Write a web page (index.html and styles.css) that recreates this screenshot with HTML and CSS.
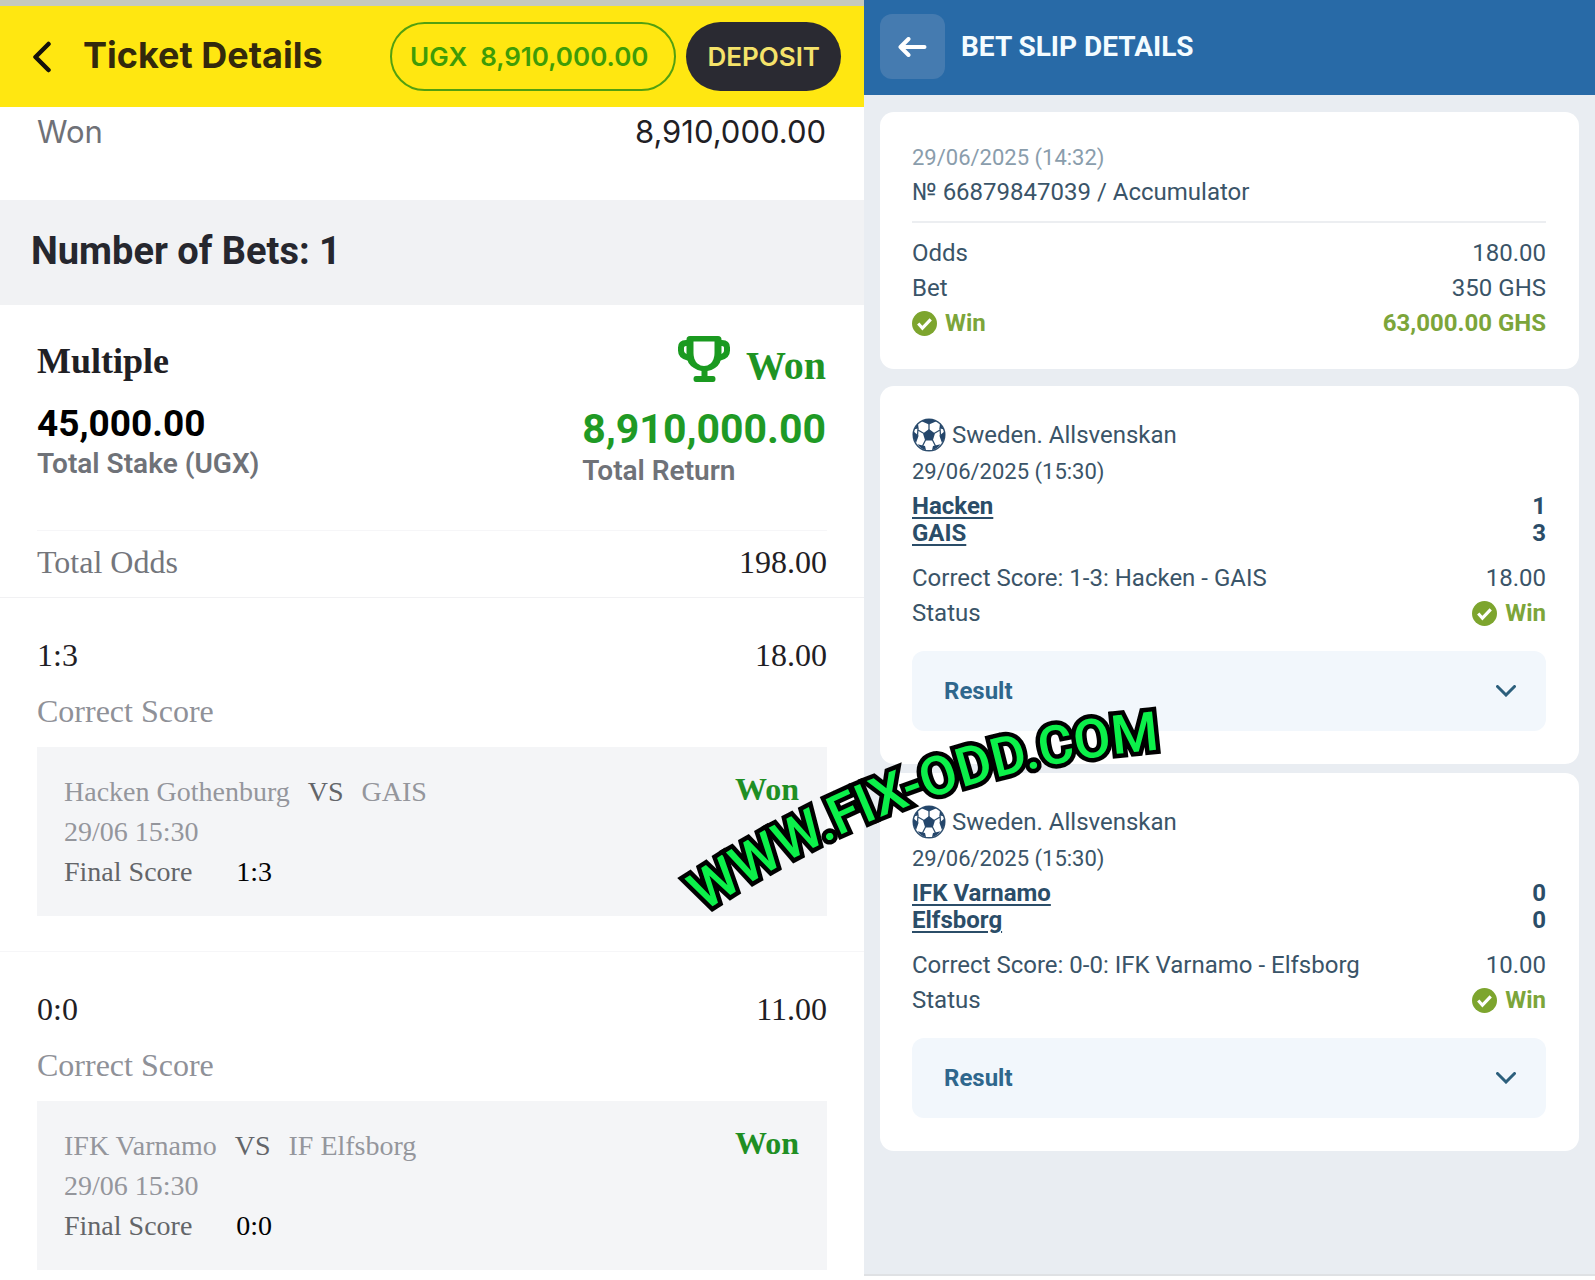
FILE: index.html
```html
<!DOCTYPE html>
<html lang="en">

<head>
    <meta charset="UTF-8">
    <meta name="viewport" content="width=device-width, initial-scale=1.0">
    <title>Ticket Details</title>
    <link rel="stylesheet" href="styles.css">
</head>

<body>
    <!-- Shared icons -->
    <svg class="sprite" aria-hidden="true">
        <symbol id="check" viewBox="0 0 24 24">
            <circle cx="12" cy="12" r="12" fill="#7da52e" />
            <path d="M6 12l4 4.500 8-8.500" fill="none" stroke="#fff" stroke-width="3" />
        </symbol>
        <symbol id="ball" viewBox="0 0 34 34">
            <circle cx="17" cy="17" r="15.8" fill="#fff" stroke="#2f4f6f" stroke-width="1.4" />
            <g fill="#24466b">
                <path d="M17 11l6 4.500-2.200 7h-7.600l-2.200-7z" />
                <path d="M9.500 3.200Q17-1 24.500 3.200L17 6.500z" />
                <path d="M33 13q.8 6.500-3 12l-2.600-7.300z" />
                <path d="M1 13q-.8 6.500 3 12l2.600-7.300z" />
                <path d="M28 5.500l4 6-4.600-1.300z" />
                <path d="M6 5.500l-4 6 4.600-1.300z" />
                <path d="M21 28l7.500-1.800q-3 4.500-8.500 6z" />
                <path d="M13 28l-7.500-1.800q3 4.500 8.500 6z" />
            </g>
            <path d="M17 5v7M22 15.500l6-3.500M20.200 21.500l3.300 6.500M13.800 21.500l-3.300 6.500M12 15.500L6 12M28 10l.5 8M6 10l-.5 8" fill="none" stroke="#2f4f6f" stroke-width="1.300" />
        </symbol>
        <symbol id="chevron" viewBox="0 0 20 12">
            <path d="M1.500 1.500L10 10l8.500-8.500" fill="none" stroke="#2c5f7c" stroke-width="3" stroke-linecap="round" />
        </symbol>
    </svg>

    <div class="page">
        <section class="ticket">
            <header class="ticket-header">
                <button class="back" aria-label="Back">
                    <svg width="18" height="32" viewBox="0 0 18 32">
                        <path d="M15.500 3L2.500 16l13 13" fill="none" stroke="#14120a" stroke-width="4.500" stroke-linecap="round" stroke-linejoin="round" />
                    </svg>
                </button>
                <h1>Ticket Details</h1>
                <button class="pill balance"><span>UGX</span><span>8,910,000.00</span></button>
                <button class="pill deposit">DEPOSIT</button>
            </header>

            <div class="won-row">
                <span>Won</span>
                <span class="won-amount">8,910,000.00</span>
            </div>

            <h2 class="bets-count">Number of Bets: 1</h2>

            <div class="summary">
                <div class="stake">
                    <h3>Multiple</h3>
                    <div class="amount">45,000.00</div>
                    <div class="label">Total Stake (UGX)</div>
                </div>
                <div class="return">
                    <div class="status">
                        <svg width="52" height="46" viewBox="0 0 52 46">
                            <path d="M11 7H8Q3 7 3 11.500v3Q3 20 10 21.500L13 22M41 7h3q5 0 5 4.500v3Q49 20 42 21.500L39 22" fill="none" stroke="#1a9a20" stroke-width="6" />
                            <path d="M12 0h28q3.500 0 3.500 3.500V18q0 10-6.500 14-3.500 2.500-7.500 3v5h5.500q2.500 0 2.500 3t-2.500 3H18q-2.500 0-2.500-3t2.500-3h5.500v-5q-4-.5-7.500-3Q8.500 28 8.500 18V3.500Q8.500 0 12 0z" fill="#1a9a20" />
                            <path d="M15.500 5.500h21V17q0 7-4 10.500Q29.500 30 26 30t-6.500-2.500Q15.500 24 15.500 17z" fill="#fff" />
                        </svg>
                        <span>Won</span>
                    </div>
                    <div class="amount">8,910,000.00</div>
                    <div class="label">Total Return</div>
                </div>
            </div>

            <div class="total-odds">
                <div class="row">
                    <span class="muted">Total Odds</span>
                    <span>198.00</span>
                </div>
            </div>

            <article class="leg">
                <div class="row">
                    <span>1:3</span>
                    <span>18.00</span>
                </div>
                <p class="market">Correct Score</p>
                <div class="event">
                    <div>
                        <p class="teams"><span>Hacken Gothenburg</span><span class="vs">VS</span><span>GAIS</span></p>
                        <p>29/06 15:30</p>
                        <p class="final"><span>Final Score</span><span class="score">1:3</span></p>
                    </div>
                    <strong>Won</strong>
                </div>
            </article>

            <article class="leg">
                <div class="row">
                    <span>0:0</span>
                    <span>11.00</span>
                </div>
                <p class="market">Correct Score</p>
                <div class="event">
                    <div>
                        <p class="teams"><span>IFK Varnamo</span><span class="vs">VS</span><span>IF Elfsborg</span></p>
                        <p>29/06 15:30</p>
                        <p class="final"><span>Final Score</span><span class="score">0:0</span></p>
                    </div>
                    <strong>Won</strong>
                </div>
            </article>
        </section>

        <section class="slip">
            <header class="slip-header">
                <button class="slip-back" aria-label="Back">
                    <svg width="29" height="20" viewBox="0 0 29 20">
                        <path d="M26.500 10H3M10.500 2L2.500 10l8 8" fill="none" stroke="#fff" stroke-width="4" stroke-linecap="round" stroke-linejoin="round" />
                    </svg>
                </button>
                <h2>BET SLIP DETAILS</h2>
            </header>

            <div class="card info">
                <div class="line date muted-date">29/06/2025 (14:32)</div>
                <div class="line">№ 66879847039 / Accumulator</div>
                <hr>
                <div class="line"><span>Odds</span><span>180.00</span></div>
                <div class="line"><span>Bet</span><span>350 GHS</span></div>
                <div class="line win">
                    <span class="badge"><svg width="25" height="25"><use href="#check" /></svg>Win</span>
                    <span>63,000.00 GHS</span>
                </div>
            </div>

            <div class="card match">
                <div class="league"><svg width="34" height="34"><use href="#ball" /></svg>Sweden. Allsvenskan</div>
                <div class="line date">29/06/2025 (15:30)</div>
                <div class="sides">
                    <div class="side"><a href="#">Hacken</a><span>1</span></div>
                    <div class="side"><a href="#">GAIS</a><span>3</span></div>
                </div>
                <div class="line"><span>Correct Score: 1-3: Hacken - GAIS</span><span>18.00</span></div>
                <div class="line">
                    <span>Status</span>
                    <span class="badge win"><svg width="25" height="25"><use href="#check" /></svg>Win</span>
                </div>
                <button class="result">Result<svg width="20" height="12"><use href="#chevron" /></svg></button>
            </div>

            <div class="card match">
                <div class="league"><svg width="34" height="34"><use href="#ball" /></svg>Sweden. Allsvenskan</div>
                <div class="line date">29/06/2025 (15:30)</div>
                <div class="sides">
                    <div class="side"><a href="#">IFK Varnamo</a><span>0</span></div>
                    <div class="side"><a href="#">Elfsborg</a><span>0</span></div>
                </div>
                <div class="line"><span>Correct Score: 0-0: IFK Varnamo - Elfsborg</span><span>10.00</span></div>
                <div class="line">
                    <span>Status</span>
                    <span class="badge win"><svg width="25" height="25"><use href="#check" /></svg>Win</span>
                </div>
                <button class="result">Result<svg width="20" height="12"><use href="#chevron" /></svg></button>
            </div>
        </section>

        <!-- Curved site name lying over both panels -->
        <svg class="watermark" width="520" height="240" viewBox="0 0 520 240">
            <path id="curve" d="M34 220Q271 62 540 55" fill="none" />
            <text><textPath href="#curve">WWW.FIX-ODD.COM</textPath></text>
        </svg>
    </div>
</body>

</html>
```
FILE: styles.css
```css
* {
    box-sizing: border-box;
}

body {
    margin: 0;
    background-color: #fff;
    font-family: Roboto, sans-serif;
}

h1,
h2,
h3,
p {
    margin: 0;
}

button {
    border: none;
    padding: 0;
    font-family: inherit;
    cursor: pointer;
}

svg {
    display: block;
    flex-shrink: 0;
}

.sprite {
    position: absolute;
    width: 0;
    height: 0;
}

.page {
    position: relative;
    display: grid;
    grid-template-columns: 864fr 731fr;
    min-height: 100vh;
    overflow: hidden;
}

/* Left panel */
.ticket {
    font-family: "Liberation Serif", serif;
    font-size: 32px;
    line-height: 40px;
    color: #1f2024;
}

.ticket-header {
    display: flex;
    align-items: center;
    gap: 10px;
    height: 107px;
    padding: 0 23px 0 33px;
    border-top: 6px solid #c6c9bd;
    background-color: #ffe711;
    font-family: Inter, sans-serif;
}

.back {
    margin-right: 22px;
    background: none;
}

.ticket-header h1 {
    margin-right: auto;
    padding-bottom: 4px;
    font-size: 36px;
    font-weight: 700;
    color: #33290c;
}

.pill {
    height: 69px;
    border-radius: 35px;
    font-size: 26px;
    font-weight: 600;
}

.balance {
    display: flex;
    align-items: center;
    gap: 13px;
    padding: 0 26px 0 18px;
    border: 2px solid #52a010;
    background: none;
    color: #3f9c06;
}

.deposit {
    padding: 0 21px;
    background-color: #2a2a32;
    color: #f5e36a;
}

.won-row {
    display: flex;
    justify-content: space-between;
    padding: 1px 38px 44px 37px;
    font-family: Inter, sans-serif;
    font-size: 31px;
    line-height: 48px;
    color: #6f7177;
}

.won-amount {
    color: #1f2024;
}

.bets-count {
    padding: 29px 31px 32px;
    background-color: #f1f2f4;
    font-family: Roboto, sans-serif;
    font-size: 38px;
    line-height: 44px;
    color: #26272e;
}

.summary {
    display: flex;
    justify-content: space-between;
    padding: 31px 38px 41px 37px;
}

.stake {
    padding-top: 3px;
}

.stake h3 {
    margin-bottom: 19px;
    font-size: 36px;
    line-height: 44px;
}

.amount {
    font-family: Roboto, sans-serif;
    font-size: 37px;
    font-weight: 700;
    line-height: 44px;
    color: #000;
}

.label {
    font-family: Roboto, sans-serif;
    font-size: 28px;
    font-weight: 600;
    line-height: 36px;
    color: #6f7278;
}

.status {
    display: flex;
    justify-content: flex-end;
    gap: 16px;
    height: 52px;
    margin-bottom: 17px;
    font-size: 40px;
    font-weight: 700;
    line-height: 44px;
    color: #1f9423;
}

.status span {
    align-self: flex-end;
}

.return .amount {
    font-size: 41px;
    line-height: 48px;
    color: #1f9a25;
}

.total-odds {
    border-bottom: 1px solid #f1f1f3;
    padding: 0 37px;
}

.row {
    display: flex;
    justify-content: space-between;
}

.total-odds .row {
    padding: 11px 0 15px;
    border-top: 1px solid #f6f6f8;
}

.muted {
    color: #74767c;
}

.leg {
    padding: 37px 37px 35px;
    border-bottom: 1px solid #f6f6f8;
}

.leg:last-child {
    border-bottom: none;
    padding-bottom: 6px;
}

.market {
    margin: 16px 0;
    color: #8f9198;
}

.event {
    display: flex;
    justify-content: space-between;
    padding: 25px 28px 24px 27px;
    background-color: #f4f5f7;
    font-size: 28px;
    color: #94969c;
}

.event strong {
    font-size: 32px;
    line-height: 34px;
    color: #1f8f24;
}

.teams {
    display: flex;
    gap: 18px;
}

.vs,
.final {
    color: #636569;
}

.final {
    display: flex;
    gap: 44px;
}

.score {
    color: #000;
}

/* Right panel */
.slip {
    margin-bottom: 4px;
    border-bottom: 2px solid #dfe1e4;
    background-color: #e9edf2;
    font-size: 24px;
    line-height: 35px;
    color: #3a5468;
}

.slip-header {
    display: flex;
    align-items: center;
    gap: 16px;
    padding: 14px 16px 16px;
    background-color: #286aa7;
}

.slip-back {
    display: flex;
    align-items: center;
    justify-content: center;
    width: 65px;
    height: 65px;
    border-radius: 12px;
    background-color: #457bb0;
}

.slip-header h2 {
    font-size: 28px;
    font-weight: 700;
    color: #f4fcff;
}

.card {
    margin: 17px 16px 0;
    border-radius: 14px;
    background-color: #fff;
}

.info {
    padding: 28px 33px 28px 32px;
}

.match {
    padding: 30px 33px 33px 32px;
}

.match + .match {
    margin-top: 9px;
}

.line {
    display: flex;
    justify-content: space-between;
}

.date {
    font-size: 22px;
}

.muted-date {
    color: #8a9dac;
}

.info hr {
    height: 2px;
    margin: 11px 0 13px;
    border: none;
    background-color: #eceef1;
}

.badge {
    display: flex;
    align-items: center;
    gap: 8px;
}

.win {
    font-weight: 700;
    color: #7ca53a;
}

.league {
    display: flex;
    align-items: center;
    gap: 6px;
    line-height: 38px;
}

.sides {
    margin: 4px 0 14px;
    font-weight: 700;
    line-height: 27px;
    color: #2b4d68;
}

.side {
    display: flex;
    justify-content: space-between;
}

.side a {
    color: inherit;
    text-decoration-thickness: 2px;
    text-underline-offset: 3px;
}

.result {
    display: flex;
    align-items: center;
    justify-content: space-between;
    width: 100%;
    height: 80px;
    margin-top: 20px;
    padding: 0 30px 0 32px;
    border-radius: 12px;
    background-color: #f2f7fc;
    font-size: 24px;
    font-weight: 700;
    color: #2f678d;
}

.watermark {
    position: absolute;
    top: 692px;
    left: 42%;
    overflow: visible;
    pointer-events: none;
}

.watermark text {
    font-family: Roboto, sans-serif;
    font-size: 54px;
    font-weight: 500;
    fill: #0cf04a;
    stroke: #000;
    stroke-width: 9px;
    paint-order: stroke;
}
```
